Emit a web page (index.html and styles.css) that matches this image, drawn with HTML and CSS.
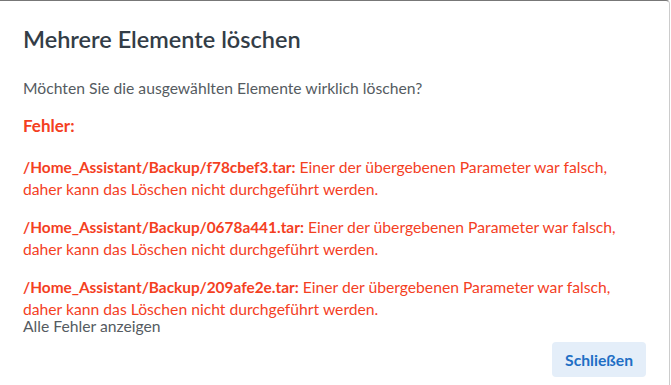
FILE: index.html
```html
<!DOCTYPE html>
<html>
<head>
    <title>Mehrere Elemente löschen</title>
    <link rel="stylesheet" href="styles.css">
</head>
<body>
    <div class="dialog">
        <h1 class="dialog-title">Mehrere Elemente löschen</h1>

        <p class="question">Möchten Sie die ausgewählten Elemente wirklich löschen?</p>

        <h2 class="error-title">Fehler:</h2>

        <div class="error-list">
            <p class="error"><b>/Home_Assistant/Backup/f78cbef3.tar:</b> Einer der übergebenen Parameter war falsch, daher kann das Löschen nicht durchgeführt werden.</p>
            <p class="error"><b>/Home_Assistant/Backup/0678a441.tar:</b> Einer der übergebenen Parameter war falsch, daher kann das Löschen nicht durchgeführt werden.</p>
            <p class="error"><b>/Home_Assistant/Backup/209afe2e.tar:</b> Einer der übergebenen Parameter war falsch, daher kann das Löschen nicht durchgeführt werden.</p>
        </div>
        <a class="show-all">Alle Fehler anzeigen</a>

        <div class="actions">
            <button class="btn-close">Schließen</button>
        </div>
    </div>
</body>
</html>
```

FILE: styles.css
```css
body { margin: 0; background: #fff; font-family: Lato, "Open Sans", sans-serif; }
.dialog { width: 670px; height: 385px; box-sizing: border-box; border-top: 1px solid #777; border-right: 1px solid #ccc; border-top-right-radius: 4px; padding: 0 23px; }
.dialog-title { margin: 0; padding-top: 24px; font-size: 23.5px; font-weight: 600; color: #333d47; line-height: 28px; }
.question { margin: 25px 0 0; font-size: 15.7px; line-height: 20px; color: #555b61; }
.error-title { margin: 17px 0 0; font-size: 17px; font-weight: 700; color: #f4401f; line-height: 22px; }
.error-list { height: 162px; overflow: hidden; margin-top: 19px; }
.error { margin: 0 0 16px; font-size: 15.7px; line-height: 22px; color: #f4401f; width: 600px; }
.error b { font-weight: 700; font-size: 15.4px; }
.show-all { display: block; font-size: 15.7px; line-height: 18px; color: #555b61; margin-top: -1px; }
.actions { display: flex; justify-content: flex-end; margin-top: 7px; padding-right: 0; }
.btn-close { background: #e4eef9; color: #1f6fc5; border: none; border-radius: 4px; padding: 0 13px; height: 35px; font-family: inherit; font-size: 15.7px; font-weight: 700; }
```
